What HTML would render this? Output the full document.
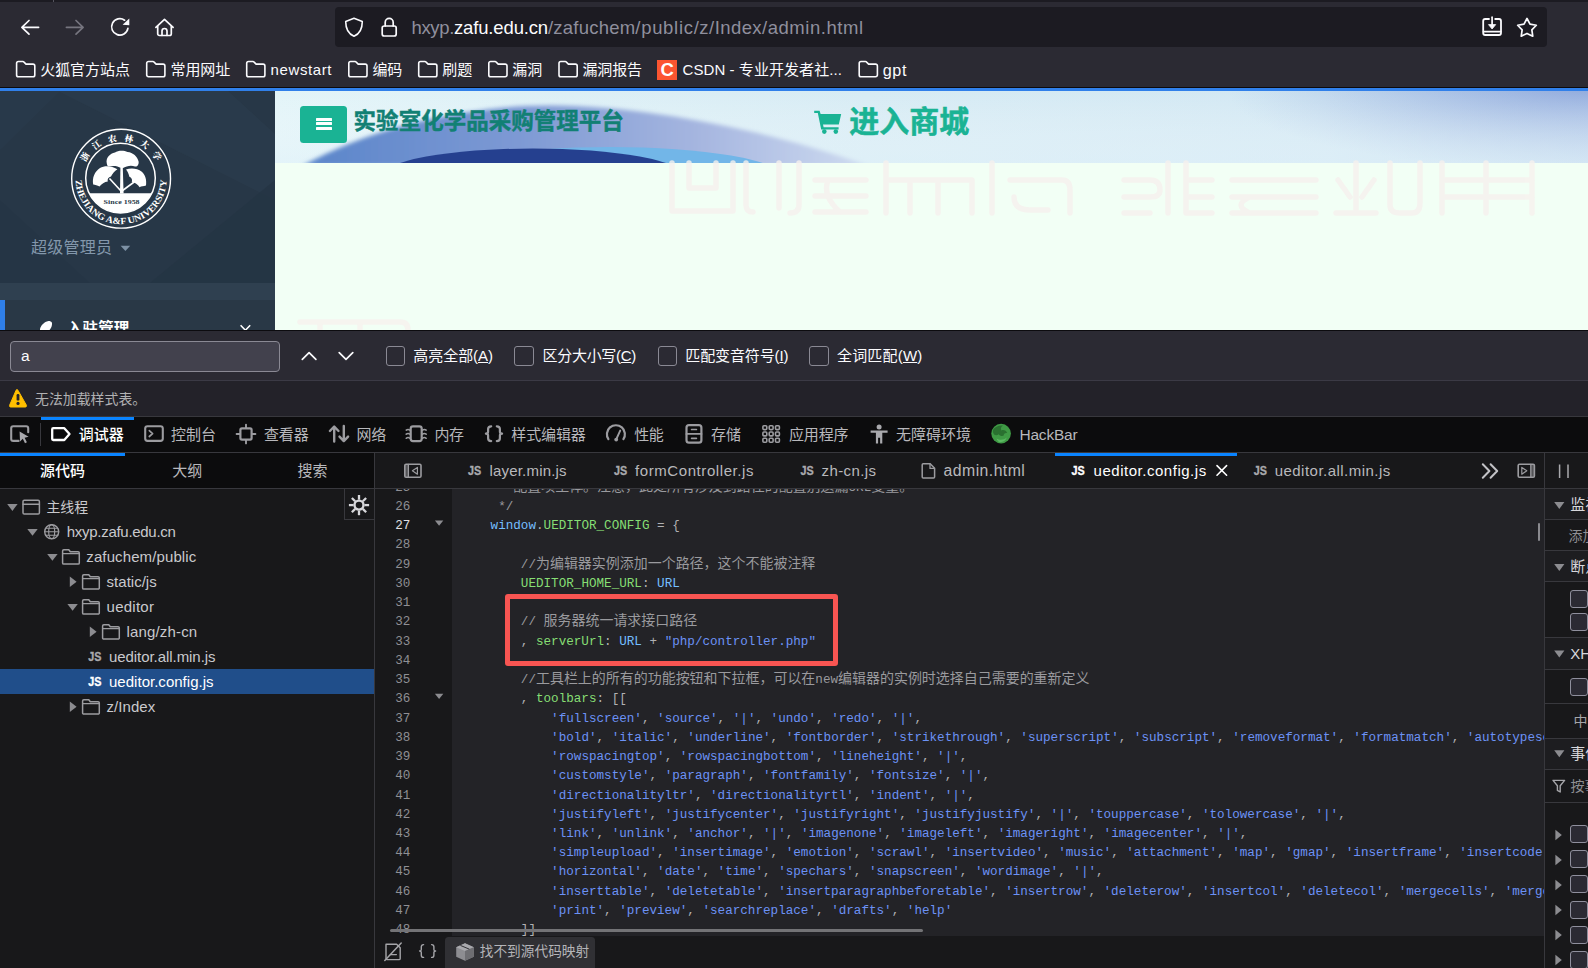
<!DOCTYPE html>
<html lang="zh-CN">
<head>
<meta charset="utf-8">
<title>admin</title>
<style>
*{box-sizing:border-box;margin:0;padding:0}
html,body{width:1588px;height:968px;overflow:hidden;background:#18181a}
body{position:relative;font-family:"Liberation Sans","Noto Sans CJK SC",sans-serif;color:#fbfbfe;font-size:15px}
.abs{position:absolute}
.t{position:absolute;white-space:pre;line-height:20px}
svg{position:absolute;overflow:visible}
.c{position:absolute;white-space:pre;font-family:"Liberation Mono","Noto Sans CJK SC",monospace;font-size:12.62px;line-height:19px;color:#b1b1b3}
.c i{font-style:normal;font-family:"Liberation Mono","Noto Sans CJK SC",monospace;font-size:13.97px;line-height:0}
.ck{position:absolute;width:18px;height:18px;border:1px solid #8f8f9d;border-radius:3px;background:#2b2a33}
</style>
</head>
<body>
<div class="abs" style="left:0px;top:0px;width:1588px;height:88px;background:#2b2a33;"></div>
<div class="abs" style="left:0px;top:0px;width:1588px;height:2px;background:#1c1b22;"></div>
<div class="abs" style="left:53px;top:0px;width:1px;height:2px;background:#55545e;"></div>
<div class="abs" style="left:335px;top:7px;width:1212px;height:40px;background:#1c1b22;border-radius:4px;"></div>
<div class="abs" style="left:0px;top:87px;width:1588px;height:1px;background:#0c0a0c;"></div>
<div class="abs" style="left:0px;top:88px;width:1588px;height:3px;background:#3080ea;"></div>
<svg style="left:0px;top:0px;" width="1588" height="88" viewBox="0 0 1588 88"><path d="M38.6 27.3H22M29 20.5L21.9 27.3L29 34.1" fill="none" stroke="#fbfbfe" stroke-width="1.7" stroke-linecap="round" stroke-linejoin="round" /><path d="M66.4 27.3H83M76 20.5L83.1 27.3L76 34.1" fill="none" stroke="#76757f" stroke-width="1.7" stroke-linecap="round" stroke-linejoin="round" /><path d="M127.9 28.3A8.2 8.2 0 1 1 124.6 20.2" fill="none" stroke="#fbfbfe" stroke-width="1.7" stroke-linecap="round" stroke-linejoin="round" /><path d="M129.3 18.4V25.2L122.6 24.7Z" fill="#fbfbfe"/><path d="M155.9 27.4L164.5 19.3L173.1 27.4" fill="none" stroke="#fbfbfe" stroke-width="1.7" stroke-linecap="round" stroke-linejoin="round" /><path d="M157.7 26.3V33.8a1.7 1.7 0 0 0 1.7 1.7H169.6a1.7 1.7 0 0 0 1.7-1.7V26.3" fill="none" stroke="#fbfbfe" stroke-width="1.7" stroke-linecap="round" stroke-linejoin="round" /><path d="M162 35.3V31a2.5 2.5 0 0 1 5 0V35.3" fill="none" stroke="#fbfbfe" stroke-width="1.7" stroke-linecap="round" stroke-linejoin="round" /><path d="M354 18.3L362.3 21.4C362.3 29 359.2 34 354 36.2C348.8 34 345.7 29 345.7 21.4Z" fill="none" stroke="#fbfbfe" stroke-width="1.6" stroke-linecap="round" stroke-linejoin="round" /><rect x="382.2" y="26" width="14" height="10" rx="2" fill="none" stroke="#fbfbfe" stroke-width="1.7"/><path d="M385.2 26V22.4a4 4 0 0 1 8 0V26" fill="none" stroke="#fbfbfe" stroke-width="1.7" stroke-linecap="round" stroke-linejoin="round" /><path d="M1489 19H1485.2a2 2 0 0 0-2 2V33a2 2 0 0 0 2 2H1499a2 2 0 0 0 2-2V21a2 2 0 0 0-2-2H1495.2" fill="none" stroke="#fbfbfe" stroke-width="1.8" stroke-linecap="round" stroke-linejoin="round" /><path d="M1483.5 31.6H1500.7" fill="none" stroke="#fbfbfe" stroke-width="1.6" stroke-linecap="round" stroke-linejoin="round" /><path d="M1492.1 17.2V26" fill="none" stroke="#fbfbfe" stroke-width="1.7" stroke-linecap="round" stroke-linejoin="round" /><path d="M1488.5 24.6H1495.7L1492.1 29Z" fill="#fbfbfe" stroke="#fbfbfe" stroke-width="0.8" stroke-linejoin="round"/><polygon points="1527.00,18.50 1530.00,24.17 1536.32,25.27 1531.85,29.88 1532.76,36.23 1527.00,33.40 1521.24,36.23 1522.15,29.88 1517.68,25.27 1524.00,24.17" fill="none" stroke="#fbfbfe" stroke-width="1.7" stroke-linejoin="round"/></svg>
<span class="t" id="t1" style="left:411.5px;top:15.5px;font-size:18.5px;line-height:24px;color:#8f8f9d;letter-spacing:-0.34px;">hxyp.</span>
<span class="t" id="t2" style="left:454px;top:15.5px;font-size:18.5px;line-height:24px;color:#fbfbfe;letter-spacing:-0.15px;">zafu.edu.cn</span>
<span class="t" id="t3" style="left:548px;top:15.5px;font-size:18.5px;line-height:24px;color:#8f8f9d;letter-spacing:0.22px;">/zafuchem</span>
<span class="t" id="t4" style="left:635.3px;top:15.5px;font-size:18.5px;line-height:24px;color:#8f8f9d;letter-spacing:0.7px;">/public</span>
<span class="t" id="t5" style="left:693.7px;top:15.5px;font-size:18.5px;line-height:24px;color:#8f8f9d;letter-spacing:0.5px;">/z</span>
<span class="t" id="t6" style="left:709.1px;top:15.5px;font-size:18.5px;line-height:24px;color:#8f8f9d;letter-spacing:0.42px;">/Index</span>
<span class="t" id="t7" style="left:762px;top:15.5px;font-size:18.5px;line-height:24px;color:#8f8f9d;letter-spacing:0.54px;">/admin.html</span>
<svg style="left:0px;top:0px;" width="1588" height="88" viewBox="0 0 1588 88"><path d="M16.6 67.5V63.3a1.8 1.8 0 0 1 1.8-1.8H22.8a1.5 1.5 0 0 1 1.2 .6L26 64.1H33a1.8 1.8 0 0 1 1.8 1.8V74.9a1.8 1.8 0 0 1-1.8 1.8H18.4a1.8 1.8 0 0 1-1.8-1.8Z" fill="none" stroke="#fbfbfe" stroke-width="1.6" stroke-linecap="round" stroke-linejoin="round" /><path d="M146.7 67.5V63.3a1.8 1.8 0 0 1 1.8-1.8H152.9a1.5 1.5 0 0 1 1.2 .6L156.1 64.1H163.1a1.8 1.8 0 0 1 1.8 1.8V74.9a1.8 1.8 0 0 1-1.8 1.8H148.5a1.8 1.8 0 0 1-1.8-1.8Z" fill="none" stroke="#fbfbfe" stroke-width="1.6" stroke-linecap="round" stroke-linejoin="round" /><path d="M246.7 67.5V63.3a1.8 1.8 0 0 1 1.8-1.8H252.9a1.5 1.5 0 0 1 1.2 .6L256.1 64.1H263.1a1.8 1.8 0 0 1 1.8 1.8V74.9a1.8 1.8 0 0 1-1.8 1.8H248.5a1.8 1.8 0 0 1-1.8-1.8Z" fill="none" stroke="#fbfbfe" stroke-width="1.6" stroke-linecap="round" stroke-linejoin="round" /><path d="M348.8 67.5V63.3a1.8 1.8 0 0 1 1.8-1.8H355a1.5 1.5 0 0 1 1.2 .6L358.2 64.1H365.2a1.8 1.8 0 0 1 1.8 1.8V74.9a1.8 1.8 0 0 1-1.8 1.8H350.6a1.8 1.8 0 0 1-1.8-1.8Z" fill="none" stroke="#fbfbfe" stroke-width="1.6" stroke-linecap="round" stroke-linejoin="round" /><path d="M418.7 67.5V63.3a1.8 1.8 0 0 1 1.8-1.8H424.9a1.5 1.5 0 0 1 1.2 .6L428.1 64.1H435.1a1.8 1.8 0 0 1 1.8 1.8V74.9a1.8 1.8 0 0 1-1.8 1.8H420.5a1.8 1.8 0 0 1-1.8-1.8Z" fill="none" stroke="#fbfbfe" stroke-width="1.6" stroke-linecap="round" stroke-linejoin="round" /><path d="M488.8 67.5V63.3a1.8 1.8 0 0 1 1.8-1.8H495a1.5 1.5 0 0 1 1.2 .6L498.2 64.1H505.2a1.8 1.8 0 0 1 1.8 1.8V74.9a1.8 1.8 0 0 1-1.8 1.8H490.6a1.8 1.8 0 0 1-1.8-1.8Z" fill="none" stroke="#fbfbfe" stroke-width="1.6" stroke-linecap="round" stroke-linejoin="round" /><path d="M559 67.5V63.3a1.8 1.8 0 0 1 1.8-1.8H565.2a1.5 1.5 0 0 1 1.2 .6L568.4 64.1H575.4a1.8 1.8 0 0 1 1.8 1.8V74.9a1.8 1.8 0 0 1-1.8 1.8H560.8a1.8 1.8 0 0 1-1.8-1.8Z" fill="none" stroke="#fbfbfe" stroke-width="1.6" stroke-linecap="round" stroke-linejoin="round" /><path d="M859.2 67.5V63.3a1.8 1.8 0 0 1 1.8-1.8H865.4a1.5 1.5 0 0 1 1.2 .6L868.6 64.1H875.6a1.8 1.8 0 0 1 1.8 1.8V74.9a1.8 1.8 0 0 1-1.8 1.8H861a1.8 1.8 0 0 1-1.8-1.8Z" fill="none" stroke="#fbfbfe" stroke-width="1.6" stroke-linecap="round" stroke-linejoin="round" /></svg>
<span class="t" id="t8" style="left:40.2px;top:59.5px;font-size:15px;line-height:20px;color:#fbfbfe;letter-spacing:-0.04px;">火狐官方站点</span>
<span class="t" id="t9" style="left:170.6px;top:59.5px;font-size:15px;line-height:20px;color:#fbfbfe;letter-spacing:-0.15px;">常用网址</span>
<span class="t" id="t10" style="left:270.6px;top:59.5px;font-size:15px;line-height:20px;color:#fbfbfe;letter-spacing:0.59px;">newstart</span>
<span class="t" id="t11" style="left:372.4px;top:59.5px;font-size:15px;line-height:20px;color:#fbfbfe;letter-spacing:-0.11px;">编码</span>
<span class="t" id="t12" style="left:442.3px;top:59.5px;font-size:15px;line-height:20px;color:#fbfbfe;letter-spacing:-0.06px;">刷题</span>
<span class="t" id="t13" style="left:512.3px;top:59.5px;font-size:15px;line-height:20px;color:#fbfbfe;letter-spacing:-0.06px;">漏洞</span>
<span class="t" id="t14" style="left:582.5px;top:59.5px;font-size:15px;line-height:20px;color:#fbfbfe;letter-spacing:-0.15px;">漏洞报告</span>
<div class="abs" style="left:657px;top:59.5px;width:20px;height:20px;background:#fc5531;"></div>
<span class="t" id="t15" style="left:660.5px;top:59.6px;font-size:18.5px;line-height:20px;color:#fff;font-weight:bold;letter-spacing:-0.38px;">C</span>
<span class="t" id="t16" style="left:682.5px;top:59.5px;font-size:15px;line-height:20px;color:#fbfbfe;letter-spacing:0.07px;">CSDN - 专业开发者社...</span>
<span class="t" id="t17" style="left:882.8px;top:59.5px;font-size:16.2px;line-height:20px;color:#fbfbfe;letter-spacing:0.56px;">gpt</span>
<div class="abs" style="left:0;top:91px;width:1588px;height:239px;overflow:hidden;background:#f2fff5">
<div class="abs" style="left:0px;top:0px;width:275px;height:239px;background:#273747;"></div>
<svg style="left:0;top:0" width="275" height="192" viewBox="0 91 275 192"><polygon points="58,91 228,91 275,134 275,200" fill="#2b3c4c" opacity=".75"/><polygon points="0,91 60,91 0,150" fill="#2a3b4b" opacity=".7"/><polygon points="150,283 275,180 275,283" fill="#243443" opacity=".8"/><polygon points="0,200 90,283 0,283" fill="#253544" opacity=".7"/></svg>
<div class="abs" style="left:0px;top:191.5px;width:275px;height:17.5px;background:#2f4050;"></div>
<div class="abs" style="left:0px;top:209px;width:275px;height:30px;background:#293846;"></div>
<div class="abs" style="left:0px;top:209px;width:5px;height:30px;background:#2f7fe8;"></div>
<svg style="left:0;top:0" width="275" height="239" viewBox="0 91 275 239"><circle cx="121.1" cy="178.7" r="49.4" fill="none" stroke="#fff" stroke-width="1.4"/><circle cx="120.5" cy="178.1" r="34.8" fill="none" stroke="#fff" stroke-width="1.5"/><path d="M151.853 193.2A34.8 34.8 0 0 1 89.1467 193.2Z" fill="#fff"/><path d="M106.8 163.5C105.5 158 110 153.5 115 152.5C118 150.2 124 150 127.5 152C133 152.6 137.5 156.5 138.6 161.5C139 164.5 137.5 166.8 135 166.5C131 165 126.5 166 122.6 168.2L121 168C117.5 165.6 112.5 165.4 108.8 166.6C107.5 166.4 107 165 106.8 163.5Z" fill="#fff"/><path d="M93.2 184.5C92 178 94.5 171.5 100 168C104.5 165.4 111.5 165.6 117.4 169.2C114.6 171.2 112.4 173.6 111 176.4C108.5 177 107 179 107.8 181.6C104.5 182 101.5 184 99.5 186.6C97.5 185.2 95 185 93.2 184.5Z" fill="#fff"/><path d="M126 169.6C131 167.8 137.5 168.4 141.8 171.8C145.4 175 146.8 180 146 185.6C143.6 186.4 141.2 186 139.6 187.2C137.8 184.4 135 182.4 131.8 181.8C132.6 179.4 131.4 177.6 129.4 176.8C128.8 174 127.6 171.6 126 169.6Z" fill="#fff"/><path d="M120.4 167.5L120 193.5H123.6L122.8 167.5Z" fill="#fff"/><path d="M121 191L109.5 178.5" stroke="#fff" stroke-width="1.6" fill="none"/><path d="M122.6 190.5L135.5 181" stroke="#fff" stroke-width="1.6" fill="none"/><defs><path id="arcb" d="M75.5 178.7A45.6 45.6 0 0 0 166.7 178.7"/></defs><text font-family="'Liberation Serif',serif" font-size="9.4" font-weight="bold" fill="#fff"><textPath href="#arcb" startOffset="1.5" textLength="140" lengthAdjust="spacingAndGlyphs">ZHEJIANG A&amp;F UNIVERSITY</textPath></text><text transform="rotate(-59 121.1 178.7)" x="121.1" y="139.5" text-anchor="middle" font-family="'Noto Serif CJK SC',serif" font-weight="900" font-size="8.8" fill="#fff">浙</text><text transform="rotate(-36 121.1 178.7)" x="121.1" y="140.1" text-anchor="middle" font-family="'Noto Serif CJK SC',serif" font-weight="900" font-size="8.8" fill="#fff">江</text><text transform="rotate(-12.5 121.1 178.7)" x="121.1" y="141.1" text-anchor="middle" font-family="'Noto Serif CJK SC',serif" font-weight="900" font-size="8.8" fill="#fff">农</text><text transform="rotate(11 121.1 178.7)" x="121.1" y="141.1" text-anchor="middle" font-family="'Noto Serif CJK SC',serif" font-weight="900" font-size="8.8" fill="#fff">林</text><text transform="rotate(34.5 121.1 178.7)" x="121.1" y="140.1" text-anchor="middle" font-family="'Noto Serif CJK SC',serif" font-weight="900" font-size="8.8" fill="#fff">大</text><text transform="rotate(57.5 121.1 178.7)" x="121.1" y="139.5" text-anchor="middle" font-family="'Noto Serif CJK SC',serif" font-weight="900" font-size="8.8" fill="#fff">学</text><text x="121.6" y="203.6" text-anchor="middle" font-family="'Liberation Serif',serif" font-size="5.6" font-weight="bold" fill="#2a3b4b" textLength="36" lengthAdjust="spacingAndGlyphs">Since 1958</text></svg>
<span class="t" id="t18" style="left:31px;top:145.6px;font-size:16px;line-height:22px;color:#8397ab;letter-spacing:0.28px;">超级管理员</span>
<svg style="left:0;top:0" width="275" height="239" viewBox="0 91 275 239"><path d="M120.6 245.7H130.2L125.4 251Z" fill="#7d91a5"/><path d="M40 329C41 325 44 322 48.5 321C50 321 51.6 321.4 52 323C52.3 326 51 328 49.6 330H40Z" fill="#fff"/><path d="M240.6 325.3L245.4 330.2L250.2 325.3" fill="none" stroke="#fff" stroke-width="1.6"/></svg>
<span class="t" id="t19" style="left:67px;top:226.7px;font-size:15.5px;line-height:22px;color:#fff;font-weight:bold;letter-spacing:0.1px;">入驻管理</span>
<svg style="left:275px;top:0;overflow:hidden" width="1313" height="72" viewBox="275 91 1313 72"><defs><linearGradient id="bg1" x1="0" y1="0" x2="1" y2="0"><stop offset="0" stop-color="#e2f4f8"/><stop offset=".45" stop-color="#d6ebf4"/><stop offset=".8" stop-color="#d1e7f3"/><stop offset="1" stop-color="#c2d9ee"/></linearGradient><linearGradient id="bg2" x1="0" y1="0" x2="0" y2="1"><stop offset="0" stop-color="#fff" stop-opacity="0"/><stop offset="1" stop-color="#e4f3fa" stop-opacity=".55"/></linearGradient><linearGradient id="sw" gradientUnits="userSpaceOnUse" x1="300" y1="0" x2="872" y2="0"><stop offset="0" stop-color="#5a85ca"/><stop offset=".38" stop-color="#7d99d4"/><stop offset=".7" stop-color="#a6b6e0"/><stop offset="1" stop-color="#cfdcf0"/></linearGradient><radialGradient id="tr" cx="1" cy="0" r="1"><stop offset="0" stop-color="#8ba5db" stop-opacity=".85"/><stop offset="1" stop-color="#8fa9dc" stop-opacity="0"/></radialGradient><filter id="bl" x="-10%" y="-30%" width="120%" height="160%"><feGaussianBlur stdDeviation="2.2"/></filter></defs><rect x="275" y="91" width="1313" height="72" fill="url(#bg1)"/><rect x="1228" y="91" width="360" height="80" fill="url(#tr)"/><rect x="275" y="91" width="1313" height="72" fill="url(#bg2)"/><g filter="url(#bl)"><path d="M302 166C372 127 465 105.5 552 105.5C655 106 785 135 868 166Z" fill="url(#sw)"/></g><ellipse cx="610" cy="176" rx="171" ry="29" fill="#72b6e8"/><ellipse cx="533" cy="176" rx="151" ry="27.5" fill="#25408f"/></svg>
<svg style="left:0;top:0;overflow:hidden" width="1588" height="239" viewBox="0 91 1588 239"><g opacity=".8"><path d="M672 163V211H733V163M689 163V188H716V163" fill="none" stroke="#f6f1ee" stroke-width="5.5" stroke-linecap="round" stroke-linejoin="round"/><path d="M746 163V205Q746 212 753 212M779 163V208M799 163V205Q799 213 790 213" fill="none" stroke="#f6f1ee" stroke-width="5.5" stroke-linecap="round" stroke-linejoin="round"/><path d="M815 180H866M815 196H866M815 212H866M828 180Q822 196 840 212" fill="none" stroke="#f6f1ee" stroke-width="5.5" stroke-linecap="round" stroke-linejoin="round"/><path d="M886 163V213M886 180H972M910 180V213M938 180V213M972 180V213" fill="none" stroke="#f6f1ee" stroke-width="5.5" stroke-linecap="round" stroke-linejoin="round"/><path d="M992 163V213M1010 180H1062Q1070 180 1070 190V213M1014 197Q1014 210 1030 210H1048" fill="none" stroke="#f6f1ee" stroke-width="5.5" stroke-linecap="round" stroke-linejoin="round"/><path d="M1124 180H1150Q1160 180 1160 190Q1160 197 1150 197H1124M1124 213H1150M1168 163V213" fill="none" stroke="#f6f1ee" stroke-width="5.5" stroke-linecap="round" stroke-linejoin="round"/><path d="M1186 163V213M1186 180H1212M1186 197H1212M1186 213H1212" fill="none" stroke="#f6f1ee" stroke-width="5.5" stroke-linecap="round" stroke-linejoin="round"/><path d="M1232 180H1316M1232 197H1316M1232 213H1316M1250 197Q1232 205 1250 213" fill="none" stroke="#f6f1ee" stroke-width="5.5" stroke-linecap="round" stroke-linejoin="round"/><path d="M1336 213H1376M1356 163V213M1338 180L1350 197M1374 180L1362 197M1390 163V205Q1390 213 1400 213H1412Q1420 213 1420 203V163" fill="none" stroke="#f6f1ee" stroke-width="5.5" stroke-linecap="round" stroke-linejoin="round"/><path d="M1442 163V213M1486 163V213M1532 163V213M1442 180H1532M1442 197H1532" fill="none" stroke="#f6f1ee" stroke-width="5.5" stroke-linecap="round" stroke-linejoin="round"/><path d="M300 322H400Q408 322 408 330M320 330V322M360 330V322" fill="none" stroke="#f6f1ee" stroke-width="5.5" stroke-linecap="round" stroke-linejoin="round"/></g></svg>
<div class="abs" style="left:300px;top:15px;width:47px;height:36.5px;background:#1ab394;border-radius:3.5px;"></div>
<div class="abs" style="left:316px;top:26.5px;width:16px;height:3px;background:#fff;border-radius:.5px;"></div>
<div class="abs" style="left:316px;top:31.3px;width:16px;height:3px;background:#fff;border-radius:.5px;"></div>
<div class="abs" style="left:316px;top:36.1px;width:16px;height:3px;background:#fff;border-radius:.5px;"></div>
<span class="t" id="t20" style="left:353.6px;top:15.7px;font-size:22.5px;line-height:30px;color:#128074;font-weight:bold;-webkit-text-stroke:.45px #128074;letter-spacing:0.02px;">实验室化学品采购管理平台</span>
<svg style="left:0;top:0" width="1588" height="239" viewBox="0 91 1588 239"><path d="M814.2 110.8H819.6L820.6 114H841.2L838.8 124.6H823L823.6 127.2H838.6V129.4H821.2L817.8 113H814.2Z" fill="#1ab394"/><circle cx="824.3" cy="131.6" r="2.3" fill="#1ab394"/><circle cx="835.8" cy="131.6" r="2.3" fill="#1ab394"/></svg>
<span class="t" id="t21" style="left:849.2px;top:11.7px;font-size:30px;line-height:38px;color:#1ab394;font-weight:bold;-webkit-text-stroke:.5px #1ab394;letter-spacing:0.05px;">进入商城</span>
</div>
<div class="abs" style="left:0px;top:330px;width:1588px;height:1px;background:#0c0b0f;"></div>
<div class="abs" style="left:0px;top:331px;width:1588px;height:49px;background:#2b2a33;"></div>
<div class="abs" style="left:0px;top:380px;width:1588px;height:1px;background:#3b3a45;"></div>
<div class="abs" style="left:10px;top:341px;width:270px;height:30.5px;background:#42414d;border:1px solid #8a8994;border-radius:4px;"></div>
<span class="t" id="t22" style="left:21px;top:345.5px;font-size:15.5px;line-height:20px;color:#fbfbfe;">a</span>
<svg style="left:0px;top:331px;" width="1588" height="49" viewBox="0 331 1588 49"><path d="M302.3 359.4L309.1 352.6L315.9 359.4" fill="none" stroke="#fbfbfe" stroke-width="1.7" stroke-linecap="round" stroke-linejoin="round"/><path d="M339.2 352.6L346 359.4L352.8 352.6" fill="none" stroke="#fbfbfe" stroke-width="1.7" stroke-linecap="round" stroke-linejoin="round"/></svg>
<div class="abs" style="left:385.5px;top:346px;width:19.5px;height:19.5px;background:#2b2a33;border:1px solid #8a8994;border-radius:3px;"></div>
<div class="abs" style="left:514px;top:346px;width:19.5px;height:19.5px;background:#2b2a33;border:1px solid #8a8994;border-radius:3px;"></div>
<div class="abs" style="left:657.5px;top:346px;width:19.5px;height:19.5px;background:#2b2a33;border:1px solid #8a8994;border-radius:3px;"></div>
<div class="abs" style="left:809.2px;top:346px;width:19.5px;height:19.5px;background:#2b2a33;border:1px solid #8a8994;border-radius:3px;"></div>
<span class="t" id="t23" style="left:413.3px;top:346px;font-size:15px;line-height:20px;color:#fbfbfe;letter-spacing:-0.05px;">高亮全部(<u>A</u>)</span>
<span class="t" id="t24" style="left:542.5px;top:346px;font-size:15px;line-height:20px;color:#fbfbfe;letter-spacing:-0.29px;">区分大小写(<u>C</u>)</span>
<span class="t" id="t25" style="left:685.3px;top:346px;font-size:15px;line-height:20px;color:#fbfbfe;letter-spacing:-0.12px;">匹配变音符号(<u>I</u>)</span>
<span class="t" id="t26" style="left:837px;top:346px;font-size:15px;line-height:20px;color:#fbfbfe;letter-spacing:0.18px;">全词匹配(<u>W</u>)</span>
<div class="abs" style="left:0px;top:381px;width:1588px;height:35px;background:#232229;"></div>
<div class="abs" style="left:0px;top:416px;width:1588px;height:1px;background:#38383d;"></div>
<svg style="left:0px;top:381px;" width="40" height="36" viewBox="0 381 40 36"><path d="M17.9 390.2L26.4 405.2a1.2 1.2 0 0 1-1 1.8H10.6a1.2 1.2 0 0 1-1-1.8L16.1 390.2a1.05 1.05 0 0 1 1.8 0Z" fill="#ffbf00" stroke="#ffbf00" stroke-width="1" stroke-linejoin="round"/><rect x="16.6" y="394" width="2.8" height="6.6" rx="1.2" fill="#232229"/><circle cx="18" cy="403.4" r="1.6" fill="#232229"/></svg>
<span class="t" id="t27" style="left:35px;top:389.2px;font-size:13.9px;line-height:20px;color:#b1b1b3;letter-spacing:0.01px;">无法加载样式表。</span>
<div class="abs" style="left:0px;top:417px;width:1588px;height:35px;background:#0c0c0d;"></div>
<div class="abs" style="left:0px;top:452px;width:1588px;height:1px;background:#38383d;"></div>
<div class="abs" style="left:41.3px;top:417px;width:92.7px;height:3px;background:#0a84ff;"></div>
<div class="abs" style="left:40px;top:422.5px;width:1px;height:23.5px;background:#38383d;"></div>
<svg style="left:0px;top:417px;" width="1588" height="36" viewBox="0 417 1588 36"><path d="M18.6 440.9H13.2a2 2 0 0 1-2-2V428.3a2 2 0 0 1 2-2H26.2a2 2 0 0 1 2 2V432.2" fill="none" stroke="#9c9ca0" stroke-width="2.1" stroke-linecap="round" stroke-linejoin="round"/><path d="M19.6 431.4L28.6 436.8L24.6 437.7L26.9 442.3L25 443.2L22.8 438.7L20 441.4Z" fill="#a9a9ad"/><path d="M53.2 428.2H64.3L69.5 434.1L64.3 440H53.2a1 1 0 0 1-1-1V429.2a1 1 0 0 1 1-1Z" fill="none" stroke="#fff" stroke-width="2.3" stroke-linecap="round" stroke-linejoin="round"/><rect x="145.2" y="426.3" width="17.6" height="14.6" rx="2.3" fill="none" stroke="#9c9ca0" stroke-width="2.1"/><path d="M149.3 430.7L152.6 433.6L149.3 436.5" fill="none" stroke="#9c9ca0" stroke-width="1.7" stroke-linecap="round" stroke-linejoin="round"/><rect x="240.4" y="428.4" width="11.2" height="11.2" rx="1.5" fill="none" stroke="#9c9ca0" stroke-width="2.2"/><path d="M246 424.6V428M246 440V443.4M236.6 434H240M252 434H255.4" fill="none" stroke="#9c9ca0" stroke-width="1.9" stroke-linecap="round" stroke-linejoin="round"/><path d="M334.2 441.6V427M329.9 431L334.2 426.5L338.5 431" fill="none" stroke="#9c9ca0" stroke-width="2.4" stroke-linecap="round" stroke-linejoin="round"/><path d="M343.8 426V440.6M339.5 436.6L343.8 441.1L348.1 436.6" fill="none" stroke="#9c9ca0" stroke-width="2.4" stroke-linecap="round" stroke-linejoin="round"/><rect x="410.7" y="426.3" width="11" height="14.8" rx="2.3" fill="none" stroke="#9c9ca0" stroke-width="2.2"/><path d="M406.2 430.1q1.8 -1.4 3.8 0M422.4 430.1q2 -1.4 3.8 0" fill="none" stroke="#9c9ca0" stroke-width="1.5" stroke-linecap="round" stroke-linejoin="round"/><path d="M406.2 434.2q1.8 -1.4 3.8 0M422.4 434.2q2 -1.4 3.8 0" fill="none" stroke="#9c9ca0" stroke-width="1.5" stroke-linecap="round" stroke-linejoin="round"/><path d="M406.2 438.3q1.8 -1.4 3.8 0M422.4 438.3q2 -1.4 3.8 0" fill="none" stroke="#9c9ca0" stroke-width="1.5" stroke-linecap="round" stroke-linejoin="round"/><path d="M491.2 426.3c-2.3 0-3.1 1-3.1 2.8v2.7c0 1.2-.6 1.9-2.2 1.9c1.6 0 2.2 .7 2.2 1.9v2.7c0 1.8 .8 2.8 3.1 2.8" fill="none" stroke="#9c9ca0" stroke-width="2.2" stroke-linecap="round" stroke-linejoin="round"/><path d="M496.8 426.3c2.3 0 3.1 1 3.1 2.8v2.7c0 1.2 .6 1.9 2.2 1.9c-1.6 0-2.2 .7-2.2 1.9v2.7c0 1.8-.8 2.8-3.1 2.8" fill="none" stroke="#9c9ca0" stroke-width="2.2" stroke-linecap="round" stroke-linejoin="round"/><path d="M608.4 439.2A9 9 0 1 1 623.4 439.2" fill="none" stroke="#9c9ca0" stroke-width="2.2" stroke-linecap="round" stroke-linejoin="round"/><circle cx="616.2" cy="439.6" r="1.9" fill="#9c9ca0"/><path d="M616.4 439L620.2 430.6" fill="none" stroke="#9c9ca0" stroke-width="1.9" stroke-linecap="round" stroke-linejoin="round"/><rect x="686.5" y="425.2" width="14.9" height="17.5" rx="2.5" fill="none" stroke="#9c9ca0" stroke-width="2.2"/><path d="M686.5 433.9H701.4" fill="none" stroke="#9c9ca0" stroke-width="1.9" stroke-linecap="round" stroke-linejoin="round"/><path d="M691.6 429.5H696.4M691.6 438.3H696.4" fill="none" stroke="#9c9ca0" stroke-width="1.7" stroke-linecap="round" stroke-linejoin="round"/><rect x="762.9" y="425.7" width="3.9" height="3.9" rx="1" fill="none" stroke="#9c9ca0" stroke-width="1.6"/><rect x="762.9" y="432" width="3.9" height="3.9" rx="1" fill="none" stroke="#9c9ca0" stroke-width="1.6"/><rect x="762.9" y="438.3" width="3.9" height="3.9" rx="1" fill="none" stroke="#9c9ca0" stroke-width="1.6"/><rect x="769.2" y="425.7" width="3.9" height="3.9" rx="1" fill="none" stroke="#9c9ca0" stroke-width="1.6"/><rect x="769.2" y="432" width="3.9" height="3.9" rx="1" fill="none" stroke="#9c9ca0" stroke-width="1.6"/><rect x="769.2" y="438.3" width="3.9" height="3.9" rx="1" fill="none" stroke="#9c9ca0" stroke-width="1.6"/><rect x="775.5" y="425.7" width="3.9" height="3.9" rx="1" fill="none" stroke="#9c9ca0" stroke-width="1.6"/><rect x="775.5" y="432" width="3.9" height="3.9" rx="1" fill="none" stroke="#9c9ca0" stroke-width="1.6"/><rect x="775.5" y="438.3" width="3.9" height="3.9" rx="1" fill="none" stroke="#9c9ca0" stroke-width="1.6"/><circle cx="879.1" cy="426.9" r="2.5" fill="#a9a9ad"/><path d="M870.6 430.4H887.6V432.8H882.3V443.4H880.1V437.8H878.1V443.4H875.9V432.8H870.6Z" fill="#a9a9ad"/><circle cx="1001.1" cy="433.6" r="9.8" fill="#3f9b45"/><path d="M993 430C995 426.5 999 425 1003 425.6C1001 427 1000.4 428.6 1001.4 430.4C1003.6 429.4 1006.4 430.4 1007.2 433C1005 432.6 1003.6 433.6 1003.8 435.6C1002 436.4 999.8 435.8 998.6 434.2C997.4 435.4 995.4 435.4 994 434.4C993 433 992.6 431.4 993 430Z" fill="#2a7130"/><path d="M996.5 438.5C999.5 440.5 1004 440.2 1006.8 437.6C1005.6 440.8 1002.6 442.6 999.4 442.2C998 441.4 997 440 996.5 438.5Z" fill="#5cb862"/></svg>
<span class="t" id="t28" style="left:78.8px;top:424.9px;font-size:15px;line-height:20px;color:#fff;font-weight:500;letter-spacing:-0.07px;">调试器</span>
<span class="t" id="t29" style="left:171.1px;top:424.9px;font-size:15px;line-height:20px;color:#b8b8bc;letter-spacing:-0.04px;">控制台</span>
<span class="t" id="t30" style="left:263.9px;top:424.9px;font-size:15px;line-height:20px;color:#b8b8bc;letter-spacing:-0.11px;">查看器</span>
<span class="t" id="t31" style="left:356.4px;top:424.9px;font-size:15px;line-height:20px;color:#b8b8bc;letter-spacing:-0.21px;">网络</span>
<span class="t" id="t32" style="left:434.4px;top:424.9px;font-size:15px;line-height:20px;color:#b8b8bc;letter-spacing:-0.41px;">内存</span>
<span class="t" id="t33" style="left:511.3px;top:424.9px;font-size:15px;line-height:20px;color:#b8b8bc;letter-spacing:-0.12px;">样式编辑器</span>
<span class="t" id="t34" style="left:634.2px;top:424.9px;font-size:15px;line-height:20px;color:#b8b8bc;letter-spacing:-0.46px;">性能</span>
<span class="t" id="t35" style="left:711.1px;top:424.9px;font-size:15px;line-height:20px;color:#b8b8bc;letter-spacing:-0.01px;">存储</span>
<span class="t" id="t36" style="left:788.9px;top:424.9px;font-size:15px;line-height:20px;color:#b8b8bc;letter-spacing:-0.13px;">应用程序</span>
<span class="t" id="t37" style="left:896px;top:424.9px;font-size:15px;line-height:20px;color:#b8b8bc;letter-spacing:0.02px;">无障碍环境</span>
<span class="t" id="t38" style="left:1019.4px;top:424.9px;font-size:15.5px;line-height:20px;color:#b8b8bc;letter-spacing:-0.19px;">HackBar</span>
<div class="abs" style="left:0px;top:453px;width:375px;height:35px;background:#0c0c0d;"></div>
<div class="abs" style="left:375px;top:453px;width:1213px;height:35px;background:#18181a;"></div>
<div class="abs" style="left:0px;top:488px;width:1588px;height:1px;background:#38383d;"></div>
<div class="abs" style="left:0px;top:453px;width:125px;height:3px;background:#0a84ff;"></div>
<div class="abs" style="left:1055px;top:453px;width:182.3px;height:3px;background:#0a84ff;"></div>
<div class="abs" style="left:374px;top:453px;width:1px;height:515px;background:#38383d;"></div>
<div class="abs" style="left:1544px;top:453px;width:1px;height:515px;background:#38383d;"></div>
<span class="t" id="t39" style="left:40px;top:460.6px;font-size:15px;line-height:20px;color:#fff;font-weight:500;letter-spacing:0.06px;">源代码</span>
<span class="t" id="t40" style="left:172.3px;top:460.6px;font-size:15px;line-height:20px;color:#b8b8bc;letter-spacing:-0.06px;">大纲</span>
<span class="t" id="t41" style="left:297.6px;top:460.6px;font-size:15px;line-height:20px;color:#b8b8bc;letter-spacing:-0.06px;">搜索</span>
<svg style="left:0px;top:453px;" width="1588" height="36" viewBox="0 453 1588 36"><rect x="404.8" y="464.3" width="16.2" height="13" rx="1.3" fill="none" stroke="#9c9ca0" stroke-width="1.6"/><rect x="404.8" y="464.3" width="3.4" height="13" fill="#9c9ca0" opacity=".45"/><path d="M408.4 464.3V477.3" fill="none" stroke="#9c9ca0" stroke-width="1.3" stroke-linecap="round" stroke-linejoin="round"/><path d="M417.4 467.4V474.2L412.4 470.8Z" fill="none" stroke="#9c9ca0" stroke-width="1.2" stroke-linecap="round" stroke-linejoin="round"/><text x="467.9" y="475.3" font-family="'Liberation Sans',sans-serif" font-weight="bold" font-size="12.6" fill="#a9a9ad" stroke="#a9a9ad" stroke-width=".35" textLength="13.2" lengthAdjust="spacingAndGlyphs">JS</text><text x="613.9" y="475.3" font-family="'Liberation Sans',sans-serif" font-weight="bold" font-size="12.6" fill="#a9a9ad" stroke="#a9a9ad" stroke-width=".35" textLength="13.2" lengthAdjust="spacingAndGlyphs">JS</text><text x="800.6" y="475.3" font-family="'Liberation Sans',sans-serif" font-weight="bold" font-size="12.6" fill="#a9a9ad" stroke="#a9a9ad" stroke-width=".35" textLength="13.2" lengthAdjust="spacingAndGlyphs">JS</text><path d="M923.2 463.8H930.2L934.6 468.2V477a1 1 0 0 1-1 1H923.2a1 1 0 0 1-1-1V464.8a1 1 0 0 1 1-1Z" fill="none" stroke="#9c9ca0" stroke-width="1.5" stroke-linecap="round" stroke-linejoin="round"/><path d="M930 464V468.4H934.4" fill="none" stroke="#9c9ca0" stroke-width="1.3" stroke-linecap="round" stroke-linejoin="round"/><text x="1071.6" y="475.3" font-family="'Liberation Sans',sans-serif" font-weight="bold" font-size="12.6" fill="#fff" stroke="#fff" stroke-width=".35" textLength="13.2" lengthAdjust="spacingAndGlyphs">JS</text><text x="1253.8" y="475.3" font-family="'Liberation Sans',sans-serif" font-weight="bold" font-size="12.6" fill="#a9a9ad" stroke="#a9a9ad" stroke-width=".35" textLength="13.2" lengthAdjust="spacingAndGlyphs">JS</text><path d="M1217 465.6L1226.6 475.2M1226.6 465.6L1217 475.2" fill="none" stroke="#fff" stroke-width="1.6" stroke-linecap="round" stroke-linejoin="round"/><path d="M1482.8 464.3L1489.4 471L1482.8 477.7M1490.6 464.3L1497.2 471L1490.6 477.7" fill="none" stroke="#c2c2c6" stroke-width="2" stroke-linecap="round" stroke-linejoin="round"/><rect x="1518.2" y="464.3" width="16.2" height="13" rx="1.3" fill="none" stroke="#9c9ca0" stroke-width="1.6"/><rect x="1531" y="464.3" width="3.4" height="13" fill="#9c9ca0" opacity=".45"/><path d="M1530.8 464.3V477.3" fill="none" stroke="#9c9ca0" stroke-width="1.3" stroke-linecap="round" stroke-linejoin="round"/><path d="M1521.8 467.4V474.2L1526.8 470.8Z" fill="none" stroke="#9c9ca0" stroke-width="1.2" stroke-linecap="round" stroke-linejoin="round"/><path d="M1559.6 464.4V478M1568 464.4V478" fill="none" stroke="#a9a9ad" stroke-width="1.5" stroke-linecap="butt" stroke-linejoin="round"/></svg>
<span class="t" id="t42" style="left:489.4px;top:460.8px;font-size:15px;line-height:20px;color:#b8b8bc;letter-spacing:0.2px;">layer.min.js</span>
<span class="t" id="t43" style="left:635px;top:460.8px;font-size:15px;line-height:20px;color:#b8b8bc;letter-spacing:0.58px;">formController.js</span>
<span class="t" id="t44" style="left:821.6px;top:460.8px;font-size:15px;line-height:20px;color:#b8b8bc;letter-spacing:0.39px;">zh-cn.js</span>
<span class="t" id="t45" style="left:943.6px;top:460.8px;font-size:15.8px;line-height:20px;color:#b8b8bc;letter-spacing:0.44px;">admin.html</span>
<span class="t" id="t46" style="left:1093.6px;top:460.8px;font-size:15px;line-height:20px;color:#fff;letter-spacing:0.52px;">ueditor.config.js</span>
<span class="t" id="t47" style="left:1274.7px;top:460.8px;font-size:15px;line-height:20px;color:#b8b8bc;letter-spacing:0.47px;">ueditor.all.min.js</span>
<div class="abs" style="left:0px;top:489px;width:374px;height:479px;background:#18181a;"></div>
<div class="abs" style="left:0px;top:669.3px;width:374px;height:25px;background:#204e8a;"></div>
<div class="abs" style="left:344px;top:489px;width:30px;height:31px;background:#18181a;border-left:1px solid #38383d;border-bottom:1px solid #38383d;"></div>
<svg style="left:0px;top:489px;" width="376" height="479" viewBox="0 489 376 479"><path d="M7.2 504.1H17.6L12.4 510.9Z" fill="#8c8c90"/><rect x="23" y="500.2" width="16.4" height="13.8" rx="1.3" fill="none" stroke="#9c9ca0" stroke-width="1.5"/><path d="M23 504.2H39.4" fill="none" stroke="#9c9ca0" stroke-width="1.4" stroke-linecap="round" stroke-linejoin="round"/><path d="M27.3 528.9H37.7L32.5 535.7Z" fill="#8c8c90"/><circle cx="51.7" cy="531.7" r="7" fill="none" stroke="#9c9ca0" stroke-width="1.4"/><ellipse cx="51.7" cy="531.7" rx="3" ry="7" fill="none" stroke="#9c9ca0" stroke-width="1.2"/><path d="M44.7 531.7H58.7M45.6 528.2H57.8M45.6 535.2H57.8" fill="none" stroke="#9c9ca0" stroke-width="1.1" stroke-linecap="round" stroke-linejoin="round"/><path d="M47.2 554H57.6L52.4 560.8Z" fill="#8c8c90"/><path d="M62.6 554.7V550.9a1.2 1.2 0 0 1 1.2-1.2H68.8l1.5 2H78.1a1.2 1.2 0 0 1 1.2 1.2V562.9a1.2 1.2 0 0 1-1.2 1.2H63.8a1.2 1.2 0 0 1-1.2-1.2Z" fill="none" stroke="#9c9ca0" stroke-width="1.5" stroke-linecap="round" stroke-linejoin="round"/><path d="M63.1 553.6H78.8" fill="none" stroke="#9c9ca0" stroke-width="1.2" stroke-linecap="round" stroke-linejoin="round"/><path d="M69.8 576.6V587L76.6 581.8Z" fill="#8c8c90"/><path d="M82.6 579.7V575.9a1.2 1.2 0 0 1 1.2-1.2H88.8l1.5 2H98.1a1.2 1.2 0 0 1 1.2 1.2V587.9a1.2 1.2 0 0 1-1.2 1.2H83.8a1.2 1.2 0 0 1-1.2-1.2Z" fill="none" stroke="#9c9ca0" stroke-width="1.5" stroke-linecap="round" stroke-linejoin="round"/><path d="M83.1 578.6H98.8" fill="none" stroke="#9c9ca0" stroke-width="1.2" stroke-linecap="round" stroke-linejoin="round"/><path d="M67.4 604H77.8L72.6 610.8Z" fill="#8c8c90"/><path d="M82.6 604.7V600.9a1.2 1.2 0 0 1 1.2-1.2H88.8l1.5 2H98.1a1.2 1.2 0 0 1 1.2 1.2V612.9a1.2 1.2 0 0 1-1.2 1.2H83.8a1.2 1.2 0 0 1-1.2-1.2Z" fill="none" stroke="#9c9ca0" stroke-width="1.5" stroke-linecap="round" stroke-linejoin="round"/><path d="M83.1 603.6H98.8" fill="none" stroke="#9c9ca0" stroke-width="1.2" stroke-linecap="round" stroke-linejoin="round"/><path d="M89.8 626.6V637L96.6 631.8Z" fill="#8c8c90"/><path d="M102.6 629.7V625.9a1.2 1.2 0 0 1 1.2-1.2H108.8l1.5 2H118.1a1.2 1.2 0 0 1 1.2 1.2V637.9a1.2 1.2 0 0 1-1.2 1.2H103.8a1.2 1.2 0 0 1-1.2-1.2Z" fill="none" stroke="#9c9ca0" stroke-width="1.5" stroke-linecap="round" stroke-linejoin="round"/><path d="M103.1 628.6H118.8" fill="none" stroke="#9c9ca0" stroke-width="1.2" stroke-linecap="round" stroke-linejoin="round"/><text x="88.2" y="661.4" font-family="'Liberation Sans',sans-serif" font-weight="bold" font-size="12.6" fill="#a9a9ad" stroke="#a9a9ad" stroke-width=".35" textLength="13.2" lengthAdjust="spacingAndGlyphs">JS</text><text x="88.2" y="686.4" font-family="'Liberation Sans',sans-serif" font-weight="bold" font-size="12.6" fill="#fff" stroke="#fff" stroke-width=".35" textLength="13.2" lengthAdjust="spacingAndGlyphs">JS</text><path d="M69.8 701.6V712L76.6 706.8Z" fill="#8c8c90"/><path d="M82.6 704.7V700.9a1.2 1.2 0 0 1 1.2-1.2H88.8l1.5 2H98.1a1.2 1.2 0 0 1 1.2 1.2V712.9a1.2 1.2 0 0 1-1.2 1.2H83.8a1.2 1.2 0 0 1-1.2-1.2Z" fill="none" stroke="#9c9ca0" stroke-width="1.5" stroke-linecap="round" stroke-linejoin="round"/><path d="M83.1 703.6H98.8" fill="none" stroke="#9c9ca0" stroke-width="1.2" stroke-linecap="round" stroke-linejoin="round"/><circle cx="359" cy="505.1" r="4.5" fill="none" stroke="#d7d7db" stroke-width="2.4"/><path d="M364.40 505.10L369.10 505.10" fill="none" stroke="#d7d7db" stroke-width="2.3" stroke-linecap="butt" stroke-linejoin="round"/><path d="M362.82 508.92L366.14 512.24" fill="none" stroke="#d7d7db" stroke-width="2.3" stroke-linecap="butt" stroke-linejoin="round"/><path d="M359.00 510.50L359.00 515.20" fill="none" stroke="#d7d7db" stroke-width="2.3" stroke-linecap="butt" stroke-linejoin="round"/><path d="M355.18 508.92L351.86 512.24" fill="none" stroke="#d7d7db" stroke-width="2.3" stroke-linecap="butt" stroke-linejoin="round"/><path d="M353.60 505.10L348.90 505.10" fill="none" stroke="#d7d7db" stroke-width="2.3" stroke-linecap="butt" stroke-linejoin="round"/><path d="M355.18 501.28L351.86 497.96" fill="none" stroke="#d7d7db" stroke-width="2.3" stroke-linecap="butt" stroke-linejoin="round"/><path d="M359.00 499.70L359.00 495.00" fill="none" stroke="#d7d7db" stroke-width="2.3" stroke-linecap="butt" stroke-linejoin="round"/><path d="M362.82 501.28L366.14 497.96" fill="none" stroke="#d7d7db" stroke-width="2.3" stroke-linecap="butt" stroke-linejoin="round"/></svg>
<span class="t" id="t48" style="left:46.5px;top:497px;font-size:13.9px;line-height:20px;color:#c9c9cd;letter-spacing:-0.06px;">主线程</span>
<span class="t" id="t49" style="left:66.8px;top:521.8px;font-size:15px;line-height:20px;color:#c9c9cd;letter-spacing:-0.29px;">hxyp.zafu.edu.cn</span>
<span class="t" id="t50" style="left:86.3px;top:546.8px;font-size:15px;line-height:20px;color:#c9c9cd;letter-spacing:0.11px;">zafuchem/public</span>
<span class="t" id="t51" style="left:106.6px;top:571.8px;font-size:15px;line-height:20px;color:#c9c9cd;letter-spacing:0.01px;">static/js</span>
<span class="t" id="t52" style="left:106.6px;top:596.8px;font-size:15px;line-height:20px;color:#c9c9cd;letter-spacing:0.25px;">ueditor</span>
<span class="t" id="t53" style="left:126.4px;top:621.8px;font-size:15px;line-height:20px;color:#c9c9cd;letter-spacing:0.18px;">lang/zh-cn</span>
<span class="t" id="t54" style="left:109px;top:646.8px;font-size:15px;line-height:20px;color:#c9c9cd;letter-spacing:-0.06px;">ueditor.all.min.js</span>
<span class="t" id="t55" style="left:109px;top:671.8px;font-size:15px;line-height:20px;color:#fff;letter-spacing:0.02px;">ueditor.config.js</span>
<span class="t" id="t56" style="left:106.6px;top:696.8px;font-size:15px;line-height:20px;color:#c9c9cd;letter-spacing:0.03px;">z/Index</span>
<div class="abs" style="left:375px;top:489px;width:77px;height:448px;background:#18181a;"></div>
<div class="abs" style="left:452px;top:489px;width:1092px;height:448px;background:#232327;"></div>
<div class="abs" style="left:376px;top:489px;width:1167.6px;height:448px;overflow:hidden">
<span class="c" style="left:0px;top:-11.34px;width:34.4px;text-align:right;color:#8f8f94">25</span>
<span class="c" style="left:84.3px;top:-11.34px"><span style="color:#9a9a9e">     * <i>配置项主体。注意，此处所有涉及到路径的配置别遗漏</i>URL<i>变量。</i></span></span>
<span class="c" style="left:0px;top:7.9px;width:34.4px;text-align:right;color:#8f8f94">26</span>
<span class="c" style="left:84.3px;top:7.9px"><span style="color:#9a9a9e">     */</span></span>
<span class="c" style="left:0px;top:27.14px;width:34.4px;text-align:right;color:#e0e0e4">27</span>
<span class="c" style="left:84.3px;top:27.14px"><span style="color:#b1b1b3">    </span><span style="color:#75bfff">window</span><span style="color:#b1b1b3">.</span><span style="color:#86de74">UEDITOR_CONFIG</span><span style="color:#b1b1b3"> = {</span></span>
<span class="c" style="left:0px;top:46.38px;width:34.4px;text-align:right;color:#8f8f94">28</span>
<span class="c" style="left:0px;top:65.62px;width:34.4px;text-align:right;color:#8f8f94">29</span>
<span class="c" style="left:84.3px;top:65.62px"><span style="color:#9a9a9e">        //<i>为编辑器实例添加一个路径，这个不能被注释</i></span></span>
<span class="c" style="left:0px;top:84.86px;width:34.4px;text-align:right;color:#8f8f94">30</span>
<span class="c" style="left:84.3px;top:84.86px"><span style="color:#b1b1b3">        </span><span style="color:#86de74">UEDITOR_HOME_URL</span><span style="color:#b1b1b3">: </span><span style="color:#75bfff">URL</span></span>
<span class="c" style="left:0px;top:104.1px;width:34.4px;text-align:right;color:#8f8f94">31</span>
<span class="c" style="left:0px;top:123.34px;width:34.4px;text-align:right;color:#8f8f94">32</span>
<span class="c" style="left:84.3px;top:123.34px"><span style="color:#9a9a9e">        // <i>服务器统一请求接口路径</i></span></span>
<span class="c" style="left:0px;top:142.58px;width:34.4px;text-align:right;color:#8f8f94">33</span>
<span class="c" style="left:84.3px;top:142.58px"><span style="color:#b1b1b3">        , </span><span style="color:#86de74">serverUrl</span><span style="color:#b1b1b3">: </span><span style="color:#75bfff">URL</span><span style="color:#b1b1b3"> + </span><span style="color:#6c92f6">"php/controller.php"</span></span>
<span class="c" style="left:0px;top:161.82px;width:34.4px;text-align:right;color:#8f8f94">34</span>
<span class="c" style="left:0px;top:181.06px;width:34.4px;text-align:right;color:#8f8f94">35</span>
<span class="c" style="left:84.3px;top:181.06px"><span style="color:#9a9a9e">        //<i>工具栏上的所有的功能按钮和下拉框，可以在</i>new<i>编辑器的实例时选择自己需要的重新定义</i></span></span>
<span class="c" style="left:0px;top:200.3px;width:34.4px;text-align:right;color:#8f8f94">36</span>
<span class="c" style="left:84.3px;top:200.3px"><span style="color:#b1b1b3">        , </span><span style="color:#86de74">toolbars</span><span style="color:#b1b1b3">: [[</span></span>
<span class="c" style="left:0px;top:219.54px;width:34.4px;text-align:right;color:#8f8f94">37</span>
<span class="c" style="left:84.3px;top:219.54px"><span style="color:#b1b1b3">            </span><span style="color:#6c92f6">'fullscreen'</span><span style="color:#b1b1b3">, </span><span style="color:#6c92f6">'source'</span><span style="color:#b1b1b3">, </span><span style="color:#6c92f6">'|'</span><span style="color:#b1b1b3">, </span><span style="color:#6c92f6">'undo'</span><span style="color:#b1b1b3">, </span><span style="color:#6c92f6">'redo'</span><span style="color:#b1b1b3">, </span><span style="color:#6c92f6">'|'</span><span style="color:#b1b1b3">,</span></span>
<span class="c" style="left:0px;top:238.78px;width:34.4px;text-align:right;color:#8f8f94">38</span>
<span class="c" style="left:84.3px;top:238.78px"><span style="color:#b1b1b3">            </span><span style="color:#6c92f6">'bold'</span><span style="color:#b1b1b3">, </span><span style="color:#6c92f6">'italic'</span><span style="color:#b1b1b3">, </span><span style="color:#6c92f6">'underline'</span><span style="color:#b1b1b3">, </span><span style="color:#6c92f6">'fontborder'</span><span style="color:#b1b1b3">, </span><span style="color:#6c92f6">'strikethrough'</span><span style="color:#b1b1b3">, </span><span style="color:#6c92f6">'superscript'</span><span style="color:#b1b1b3">, </span><span style="color:#6c92f6">'subscript'</span><span style="color:#b1b1b3">, </span><span style="color:#6c92f6">'removeformat'</span><span style="color:#b1b1b3">, </span><span style="color:#6c92f6">'formatmatch'</span><span style="color:#b1b1b3">, </span><span style="color:#6c92f6">'autotypeset'</span><span style="color:#b1b1b3">, </span><span style="color:#6c92f6">'blockquote'</span><span style="color:#b1b1b3">, </span><span style="color:#6c92f6">'pasteplain'</span><span style="color:#b1b1b3">, </span><span style="color:#6c92f6">'|'</span><span style="color:#b1b1b3">, </span><span style="color:#6c92f6">'forecolor'</span><span style="color:#b1b1b3">, </span><span style="color:#6c92f6">'backcolor'</span><span style="color:#b1b1b3">, </span><span style="color:#6c92f6">'insertorderedlist'</span><span style="color:#b1b1b3">, </span><span style="color:#6c92f6">'insertunorderedlist'</span><span style="color:#b1b1b3">, </span><span style="color:#6c92f6">'selectall'</span><span style="color:#b1b1b3">, </span><span style="color:#6c92f6">'cleardoc'</span><span style="color:#b1b1b3">, </span><span style="color:#6c92f6">'|'</span><span style="color:#b1b1b3">,</span></span>
<span class="c" style="left:0px;top:258.02px;width:34.4px;text-align:right;color:#8f8f94">39</span>
<span class="c" style="left:84.3px;top:258.02px"><span style="color:#b1b1b3">            </span><span style="color:#6c92f6">'rowspacingtop'</span><span style="color:#b1b1b3">, </span><span style="color:#6c92f6">'rowspacingbottom'</span><span style="color:#b1b1b3">, </span><span style="color:#6c92f6">'lineheight'</span><span style="color:#b1b1b3">, </span><span style="color:#6c92f6">'|'</span><span style="color:#b1b1b3">,</span></span>
<span class="c" style="left:0px;top:277.26px;width:34.4px;text-align:right;color:#8f8f94">40</span>
<span class="c" style="left:84.3px;top:277.26px"><span style="color:#b1b1b3">            </span><span style="color:#6c92f6">'customstyle'</span><span style="color:#b1b1b3">, </span><span style="color:#6c92f6">'paragraph'</span><span style="color:#b1b1b3">, </span><span style="color:#6c92f6">'fontfamily'</span><span style="color:#b1b1b3">, </span><span style="color:#6c92f6">'fontsize'</span><span style="color:#b1b1b3">, </span><span style="color:#6c92f6">'|'</span><span style="color:#b1b1b3">,</span></span>
<span class="c" style="left:0px;top:296.5px;width:34.4px;text-align:right;color:#8f8f94">41</span>
<span class="c" style="left:84.3px;top:296.5px"><span style="color:#b1b1b3">            </span><span style="color:#6c92f6">'directionalityltr'</span><span style="color:#b1b1b3">, </span><span style="color:#6c92f6">'directionalityrtl'</span><span style="color:#b1b1b3">, </span><span style="color:#6c92f6">'indent'</span><span style="color:#b1b1b3">, </span><span style="color:#6c92f6">'|'</span><span style="color:#b1b1b3">,</span></span>
<span class="c" style="left:0px;top:315.74px;width:34.4px;text-align:right;color:#8f8f94">42</span>
<span class="c" style="left:84.3px;top:315.74px"><span style="color:#b1b1b3">            </span><span style="color:#6c92f6">'justifyleft'</span><span style="color:#b1b1b3">, </span><span style="color:#6c92f6">'justifycenter'</span><span style="color:#b1b1b3">, </span><span style="color:#6c92f6">'justifyright'</span><span style="color:#b1b1b3">, </span><span style="color:#6c92f6">'justifyjustify'</span><span style="color:#b1b1b3">, </span><span style="color:#6c92f6">'|'</span><span style="color:#b1b1b3">, </span><span style="color:#6c92f6">'touppercase'</span><span style="color:#b1b1b3">, </span><span style="color:#6c92f6">'tolowercase'</span><span style="color:#b1b1b3">, </span><span style="color:#6c92f6">'|'</span><span style="color:#b1b1b3">,</span></span>
<span class="c" style="left:0px;top:334.98px;width:34.4px;text-align:right;color:#8f8f94">43</span>
<span class="c" style="left:84.3px;top:334.98px"><span style="color:#b1b1b3">            </span><span style="color:#6c92f6">'link'</span><span style="color:#b1b1b3">, </span><span style="color:#6c92f6">'unlink'</span><span style="color:#b1b1b3">, </span><span style="color:#6c92f6">'anchor'</span><span style="color:#b1b1b3">, </span><span style="color:#6c92f6">'|'</span><span style="color:#b1b1b3">, </span><span style="color:#6c92f6">'imagenone'</span><span style="color:#b1b1b3">, </span><span style="color:#6c92f6">'imageleft'</span><span style="color:#b1b1b3">, </span><span style="color:#6c92f6">'imageright'</span><span style="color:#b1b1b3">, </span><span style="color:#6c92f6">'imagecenter'</span><span style="color:#b1b1b3">, </span><span style="color:#6c92f6">'|'</span><span style="color:#b1b1b3">,</span></span>
<span class="c" style="left:0px;top:354.22px;width:34.4px;text-align:right;color:#8f8f94">44</span>
<span class="c" style="left:84.3px;top:354.22px"><span style="color:#b1b1b3">            </span><span style="color:#6c92f6">'simpleupload'</span><span style="color:#b1b1b3">, </span><span style="color:#6c92f6">'insertimage'</span><span style="color:#b1b1b3">, </span><span style="color:#6c92f6">'emotion'</span><span style="color:#b1b1b3">, </span><span style="color:#6c92f6">'scrawl'</span><span style="color:#b1b1b3">, </span><span style="color:#6c92f6">'insertvideo'</span><span style="color:#b1b1b3">, </span><span style="color:#6c92f6">'music'</span><span style="color:#b1b1b3">, </span><span style="color:#6c92f6">'attachment'</span><span style="color:#b1b1b3">, </span><span style="color:#6c92f6">'map'</span><span style="color:#b1b1b3">, </span><span style="color:#6c92f6">'gmap'</span><span style="color:#b1b1b3">, </span><span style="color:#6c92f6">'insertframe'</span><span style="color:#b1b1b3">, </span><span style="color:#6c92f6">'insertcode'</span><span style="color:#b1b1b3">, </span><span style="color:#6c92f6">'webapp'</span><span style="color:#b1b1b3">, </span><span style="color:#6c92f6">'pagebreak'</span><span style="color:#b1b1b3">, </span><span style="color:#6c92f6">'template'</span><span style="color:#b1b1b3">, </span><span style="color:#6c92f6">'background'</span><span style="color:#b1b1b3">, </span><span style="color:#6c92f6">'|'</span><span style="color:#b1b1b3">,</span></span>
<span class="c" style="left:0px;top:373.46px;width:34.4px;text-align:right;color:#8f8f94">45</span>
<span class="c" style="left:84.3px;top:373.46px"><span style="color:#b1b1b3">            </span><span style="color:#6c92f6">'horizontal'</span><span style="color:#b1b1b3">, </span><span style="color:#6c92f6">'date'</span><span style="color:#b1b1b3">, </span><span style="color:#6c92f6">'time'</span><span style="color:#b1b1b3">, </span><span style="color:#6c92f6">'spechars'</span><span style="color:#b1b1b3">, </span><span style="color:#6c92f6">'snapscreen'</span><span style="color:#b1b1b3">, </span><span style="color:#6c92f6">'wordimage'</span><span style="color:#b1b1b3">, </span><span style="color:#6c92f6">'|'</span><span style="color:#b1b1b3">,</span></span>
<span class="c" style="left:0px;top:392.7px;width:34.4px;text-align:right;color:#8f8f94">46</span>
<span class="c" style="left:84.3px;top:392.7px"><span style="color:#b1b1b3">            </span><span style="color:#6c92f6">'inserttable'</span><span style="color:#b1b1b3">, </span><span style="color:#6c92f6">'deletetable'</span><span style="color:#b1b1b3">, </span><span style="color:#6c92f6">'insertparagraphbeforetable'</span><span style="color:#b1b1b3">, </span><span style="color:#6c92f6">'insertrow'</span><span style="color:#b1b1b3">, </span><span style="color:#6c92f6">'deleterow'</span><span style="color:#b1b1b3">, </span><span style="color:#6c92f6">'insertcol'</span><span style="color:#b1b1b3">, </span><span style="color:#6c92f6">'deletecol'</span><span style="color:#b1b1b3">, </span><span style="color:#6c92f6">'mergecells'</span><span style="color:#b1b1b3">, </span><span style="color:#6c92f6">'mergeright'</span><span style="color:#b1b1b3">, </span><span style="color:#6c92f6">'mergedown'</span><span style="color:#b1b1b3">, </span><span style="color:#6c92f6">'splittocells'</span><span style="color:#b1b1b3">, </span><span style="color:#6c92f6">'splittorows'</span><span style="color:#b1b1b3">, </span><span style="color:#6c92f6">'splittocols'</span><span style="color:#b1b1b3">, </span><span style="color:#6c92f6">'charts'</span><span style="color:#b1b1b3">, </span><span style="color:#6c92f6">'|'</span><span style="color:#b1b1b3">,</span></span>
<span class="c" style="left:0px;top:411.94px;width:34.4px;text-align:right;color:#8f8f94">47</span>
<span class="c" style="left:84.3px;top:411.94px"><span style="color:#b1b1b3">            </span><span style="color:#6c92f6">'print'</span><span style="color:#b1b1b3">, </span><span style="color:#6c92f6">'preview'</span><span style="color:#b1b1b3">, </span><span style="color:#6c92f6">'searchreplace'</span><span style="color:#b1b1b3">, </span><span style="color:#6c92f6">'drafts'</span><span style="color:#b1b1b3">, </span><span style="color:#6c92f6">'help'</span></span>
<span class="c" style="left:0px;top:431.18px;width:34.4px;text-align:right;color:#8f8f94">48</span>
<span class="c" style="left:84.3px;top:431.18px"><span style="color:#b1b1b3">        ]]</span></span>
<svg style="left:0;top:0" width="1169" height="448" viewBox="376 489 1169 448"><path d="M434.9 520.54H443.3L439.1 525.74Z" fill="#8c8c90"/><path d="M434.9 693.7H443.3L439.1 698.9Z" fill="#8c8c90"/></svg>
<div class="abs" style="left:129px;top:104.8px;width:333px;height:72px;border:5.4px solid #f85552;border-radius:3px"></div>
<div class="abs" style="left:14px;top:440.3px;width:533px;height:2.6px;border-radius:2px;background:#737376"></div>
<div class="abs" style="left:1161.6px;top:34.2px;width:2.4px;height:18px;border-radius:1px;background:#8a8a8f"></div>
</div>
<div class="abs" style="left:375px;top:936px;width:1169px;height:32px;background:#18181a;"></div>
<div class="abs" style="left:445.4px;top:937px;width:149.6px;height:31px;background:#303034;border-radius:3.5px 3.5px 0 0;"></div>
<svg style="left:376px;top:937px;" width="1169" height="31" viewBox="376 937 1169 31"><path d="M386 944.2H396.6L400.2 947.8V958.4a1.2 1.2 0 0 1-1.2 1.2H387.2a1.2 1.2 0 0 1-1.2-1.2Z" fill="none" stroke="#a5a5a9" stroke-width="1.4" stroke-linecap="round" stroke-linejoin="round"/><path d="M390.4 954.6H396.4" fill="none" stroke="#a5a5a9" stroke-width="1.3" stroke-linecap="round" stroke-linejoin="round"/><path d="M384.8 960.4L401.2 943" fill="none" stroke="#a5a5a9" stroke-width="1.5" stroke-linecap="round" stroke-linejoin="round"/><path d="M423.6 944.6c-1.7 0-2.3 .8-2.3 2.2v2.6c0 1-.5 1.6-1.7 1.6c1.2 0 1.7 .6 1.7 1.6v2.6c0 1.4 .6 2.2 2.3 2.2" fill="none" stroke="#a5a5a9" stroke-width="1.4" stroke-linecap="round" stroke-linejoin="round"/><path d="M431.6 944.6c1.7 0 2.3 .8 2.3 2.2v2.6c0 1 .5 1.6 1.7 1.6c-1.2 0-1.7 .6-1.7 1.6v2.6c0 1.4-.6 2.2-2.3 2.2" fill="none" stroke="#a5a5a9" stroke-width="1.4" stroke-linecap="round" stroke-linejoin="round"/><path d="M456.2 947.2L465 943.2L473.8 947.2V956.8L465 960.8L456.2 956.8Z" fill="#8d8d91"/><path d="M456.2 947.2L465 951L473.8 947.2L465 943.2Z" fill="#a9a9ad"/><path d="M465 951V960.8L473.8 956.8V947.2Z" fill="#6e6e72"/><path d="M460.4 945.4L469.4 949.2" stroke="#303034" stroke-width="1"/></svg>
<span class="t" id="t57" style="left:479.7px;top:941.8px;font-size:13.7px;line-height:20px;color:#b4b4b8;letter-spacing:0.01px;">找不到源代码映射</span>
<div class="abs" style="left:1545px;top:489px;width:43px;height:479px;overflow:hidden;background:#18181a">
<div class="abs" style="left:0px;top:0px;width:43px;height:30px;background:#1d1d20;"></div>
<div class="abs" style="left:0px;top:62px;width:43px;height:30px;background:#1d1d20;"></div>
<div class="abs" style="left:0px;top:149px;width:43px;height:30.5px;background:#1d1d20;"></div>
<div class="abs" style="left:0px;top:250px;width:43px;height:30px;background:#1d1d20;"></div>
<div class="abs" style="left:0px;top:30px;width:43px;height:1px;background:#38383d;"></div>
<div class="abs" style="left:0px;top:61px;width:43px;height:1px;background:#38383d;"></div>
<div class="abs" style="left:0px;top:92px;width:43px;height:1px;background:#38383d;"></div>
<div class="abs" style="left:0px;top:148.4px;width:43px;height:1px;background:#38383d;"></div>
<div class="abs" style="left:0px;top:179.5px;width:43px;height:1px;background:#38383d;"></div>
<div class="abs" style="left:0px;top:213.6px;width:43px;height:1px;background:#38383d;"></div>
<div class="abs" style="left:0px;top:249.2px;width:43px;height:1px;background:#38383d;"></div>
<div class="abs" style="left:0px;top:280.2px;width:43px;height:1px;background:#38383d;"></div>
<div class="abs" style="left:0px;top:312.8px;width:43px;height:1px;background:#38383d;"></div>
<svg style="left:0;top:0" width="43" height="479" viewBox="1545 489 43 479"><path d="M1554.2 501.9H1564.4L1559.3 508.9Z" fill="#8c8c90"/><path d="M1554.2 563.9H1564.4L1559.3 570.9Z" fill="#8c8c90"/><path d="M1554.2 650.4H1564.4L1559.3 657.4Z" fill="#8c8c90"/><path d="M1554.2 750.2H1564.4L1559.3 757.2Z" fill="#8c8c90"/><path d="M1555.4 829.8V840.2L1561.8 835Z" fill="#8c8c90"/><path d="M1555.4 854.8V865.2L1561.8 860Z" fill="#8c8c90"/><path d="M1555.4 879.8V890.2L1561.8 885Z" fill="#8c8c90"/><path d="M1555.4 904.8V915.2L1561.8 910Z" fill="#8c8c90"/><path d="M1555.4 929.8V940.2L1561.8 935Z" fill="#8c8c90"/><path d="M1555.4 954.8V965.2L1561.8 960Z" fill="#8c8c90"/><path d="M1553 780.4H1564.6L1560.2 785.8V792L1557.4 790.4V785.8Z" fill="none" stroke="#a5a5a9" stroke-width="1.4" stroke-linejoin="round"/></svg>
<span class="t" style="left:25.2px;top:6.2px;font-size:15px;color:#d7d7db">监视表达式</span>
<span class="t" style="left:23.6px;top:36.6px;font-size:14px;color:#8f8f94">添加监视表达式</span>
<span class="t" style="left:25.2px;top:68.2px;font-size:15px;color:#d7d7db">断点</span>
<span class="t" style="left:25.2px;top:154.8px;font-size:15px;color:#d7d7db">XHR 断点</span>
<span class="t" style="left:28.4px;top:221.8px;font-size:14px;color:#a5a5a9">中断于任意 URL</span>
<span class="t" style="left:25.2px;top:254.6px;font-size:15px;color:#d7d7db">事件监听器断点</span>
<span class="t" style="left:25.4px;top:287.4px;font-size:14px;color:#8f8f94">按事件类型过滤</span>
<div class="ck" style="left:25.4px;top:101.4px"></div>
<div class="ck" style="left:25.4px;top:124px"></div>
<div class="ck" style="left:25.4px;top:188.6px"></div>
<div class="ck" style="left:25.4px;top:336.2px"></div>
<div class="ck" style="left:25.4px;top:361.2px"></div>
<div class="ck" style="left:25.4px;top:386.2px"></div>
<div class="ck" style="left:25.4px;top:411.6px"></div>
<div class="ck" style="left:25.4px;top:437px"></div>
<div class="ck" style="left:25.4px;top:462.4px"></div>
</div>
</body>
</html>
